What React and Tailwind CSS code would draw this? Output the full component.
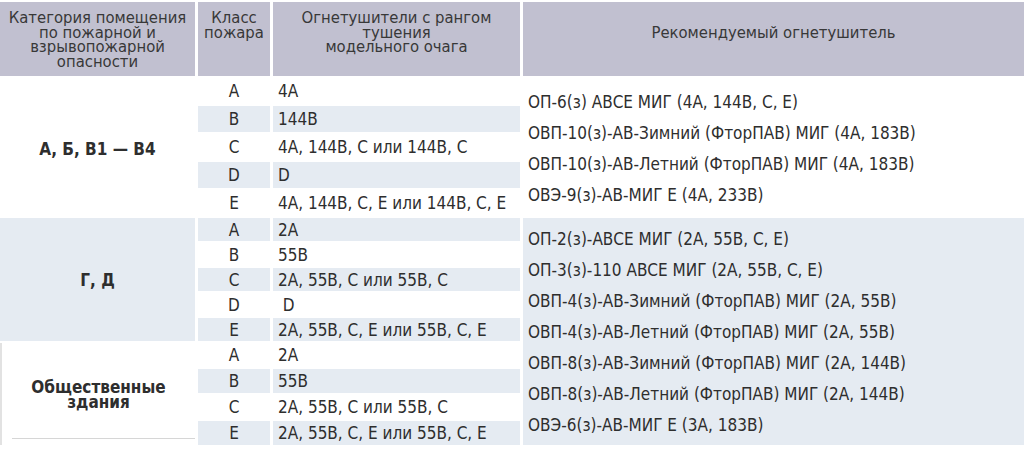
const s1 = [
  ['A', '4A', false],
  ['B', '144B', true],
  ['C', '4A, 144B, C или 144B, C', false],
  ['D', 'D', true],
  ['E', '4A, 144B, C, E или 144B, C, E', false],
];

const s2 = [
  ['A', '2A', true],
  ['B', '55B', false],
  ['C', '2A, 55B, C или 55B, C', true],
  ['D', '\u00a0D', false],
  ['E', '2A, 55B, C, E или 55B, C, E', true],
];

const s3 = [
  ['A', '2A', false],
  ['B', '55B', true],
  ['C', '2A, 55B, C или 55B, C', false],
  ['E', '2A, 55B, C, E или 55B, C, E', true],
];

const rec1 = [
  'ОП-6(з) АВСЕ МИГ (4А, 144В, С, Е)',
  'ОВП-10(з)-АВ-Зимний (ФторПАВ) МИГ (4А, 183В)',
  'ОВП-10(з)-АВ-Летний (ФторПАВ) МИГ (4А, 183В)',
  'ОВЭ-9(з)-АВ-МИГ Е (4А, 233В)',
];

const rec2 = [
  'ОП-2(з)-АВСЕ МИГ (2А, 55В, С, Е)',
  'ОП-3(з)-110 АВСЕ МИГ (2А, 55В, С, Е)',
  'ОВП-4(з)-АВ-Зимний (ФторПАВ) МИГ (2А, 55В)',
  'ОВП-4(з)-АВ-Летний (ФторПАВ) МИГ (2А, 55В)',
  'ОВП-8(з)-АВ-Зимний (ФторПАВ) МИГ (2А, 144В)',
  'ОВП-8(з)-АВ-Летний (ФторПАВ) МИГ (2А, 144В)',
  'ОВЭ-6(з)-АВ-МИГ Е (3А, 183В)',
];

function Rows({ rows }) {
  return rows.map(([cls, rank, blue]) => (
    <>
      <div key={cls + 'c'} className={`flex items-center justify-center pt-[2px] ${blue ? 'bg-[#e5ebf2]' : 'bg-white'}`}>{cls}</div>
      <div key={cls + 'r'} className={`flex items-center pl-[5px] pt-[2px] whitespace-pre ${blue ? 'bg-[#e5ebf2]' : 'bg-white'}`}>{rank}</div>
    </>
  ));
}

export default function App() {
  return (
    <div
      className="w-[1024px] h-[451px] bg-white pt-[2px] text-[17px] text-[#2e2e2e]"
      style={{ fontFamily: "'DejaVu Sans Condensed', 'DejaVu Sans', sans-serif", fontStretch: 'condensed' }}
    >
      <div className="grid grid-cols-[195px_72px_247px_1fr] grid-rows-[74px_repeat(5,26px)_repeat(5,23px)_repeat(4,24px)] gap-x-[3px] gap-y-[2px]">
        {/* Header */}
        <div className="bg-[#c1c0d0] flex items-center justify-center pt-[2px] text-center text-[16.5px] leading-[14.5px] text-[#383838]">
          Категория помещения<br />по пожарной и<br />взрывопожарной<br />опасности
        </div>
        <div className="bg-[#c1c0d0] pt-[9px] text-center text-[16.5px] leading-[14.5px] text-[#383838]">
          Класс<br />пожара
        </div>
        <div className="bg-[#c1c0d0] pt-[9px] text-center text-[16.5px] leading-[14.5px] text-[#383838]">
          Огнетушители с рангом<br />тушения<br />модельного очага
        </div>
        <div className="bg-[#c1c0d0] pt-[24px] text-center text-[16.5px] leading-[14.5px] text-[#383838]">
          Рекомендуемый огнетушитель
        </div>

        {/* А, Б, В1 — В4 */}
        <div className="row-span-5 bg-white flex items-center justify-center pt-[6px] font-bold">А, Б, В1 — В4</div>
        <Rows rows={s1.slice(0, 1)} />
        <div className="row-span-5 bg-white flex flex-col justify-center pl-[5px] pt-[3px] leading-[31px]">
          {rec1.map(t => <div key={t}>{t}</div>)}
        </div>
        <Rows rows={s1.slice(1)} />

        {/* Г, Д */}
        <div className="row-span-5 bg-[#e5ebf2] flex items-center justify-center pt-[2px] font-bold">Г, Д</div>
        <Rows rows={s2.slice(0, 1)} />
        <div className="row-span-9 bg-[#e5ebf2] flex flex-col justify-center pl-[5px] pt-[2px] leading-[31px]">
          {rec2.map(t => <div key={t}>{t}</div>)}
        </div>
        <Rows rows={s2.slice(1)} />

        {/* Общественные здания */}
        <div className="row-span-4 bg-white border-l-2 border-[#e2e2e2] flex flex-col">
          <div className="flex-1 flex items-center justify-center pt-[8px] text-center font-bold leading-[15px]">
            Общественные<br />здания
          </div>
          <div className="ml-[10px] mb-[6px] border-b border-[#d6d6d6]" />
        </div>
        <Rows rows={s3} />
      </div>
    </div>
  );
}
